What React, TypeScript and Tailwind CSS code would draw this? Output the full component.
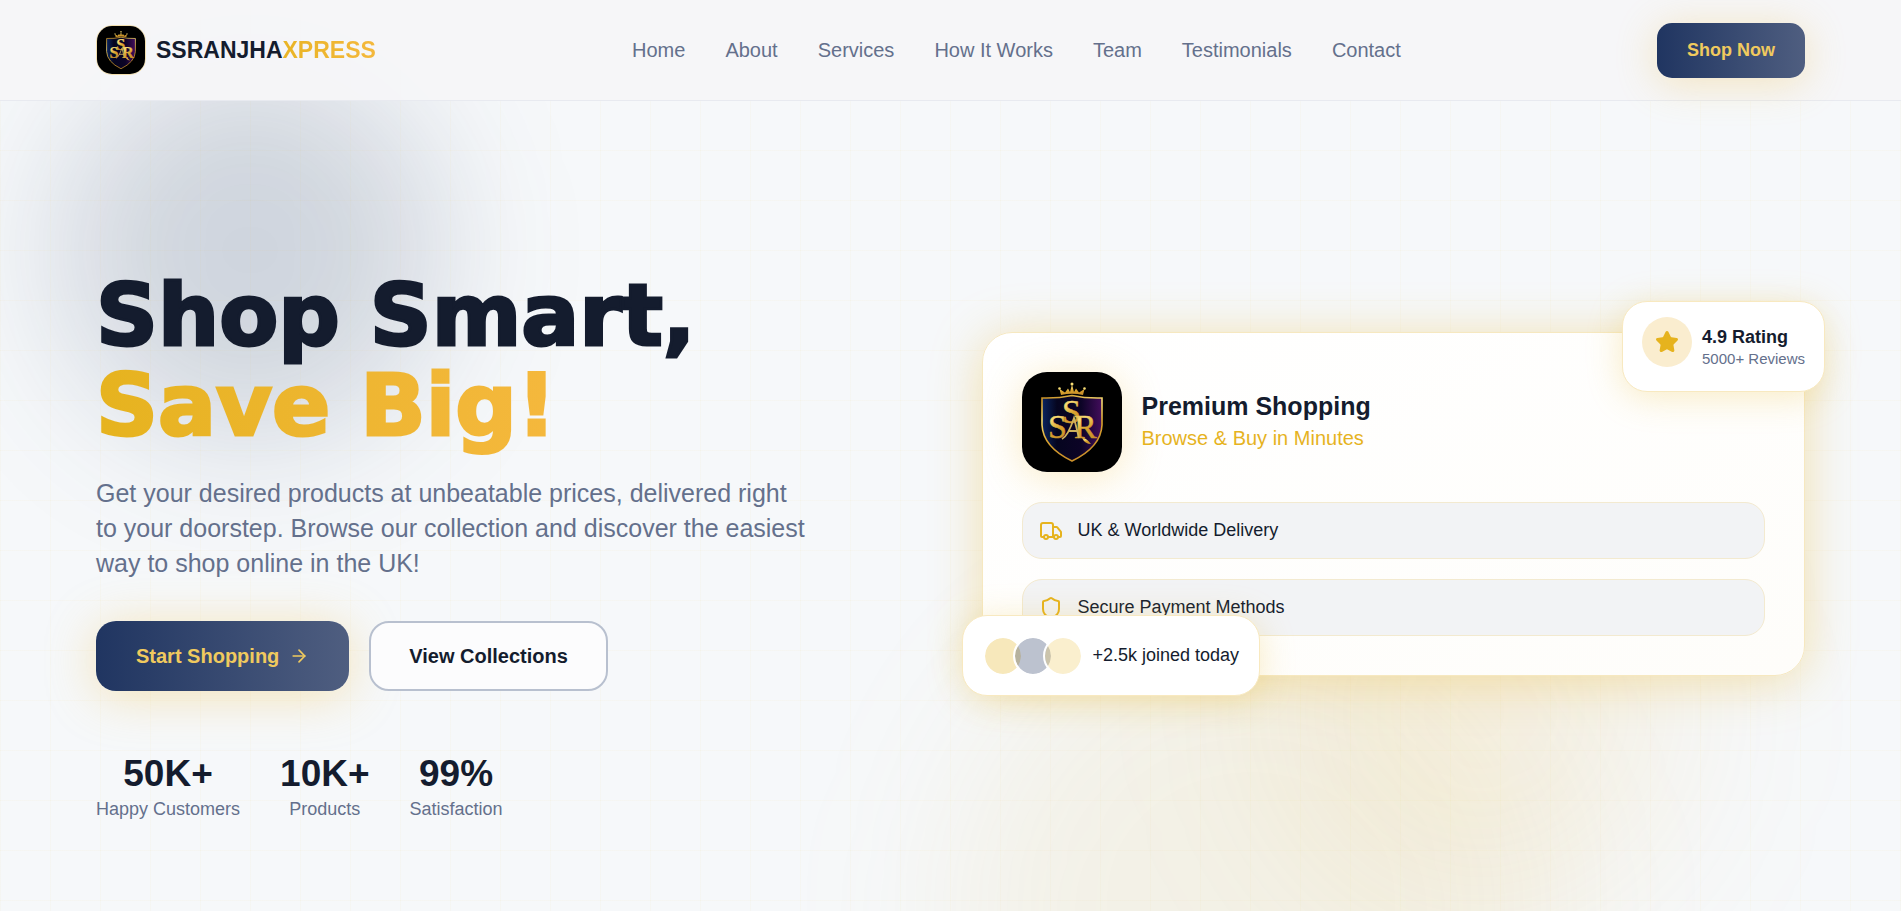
import { ArrowRight, Shield, Star, Truck } from "lucide-react"

const navLinks = ["Home", "About", "Services", "How It Works", "Team", "Testimonials", "Contact"]

const stats = [
  { value: "50K+", label: "Happy Customers" },
  { value: "10K+", label: "Products" },
  { value: "99%", label: "Satisfaction" },
]

const features = [
  { icon: Truck, label: "UK & Worldwide Delivery" },
  { icon: Shield, label: "Secure Payment Methods" },
]

function Crest({ id, className }: { id: string; className: string }) {
  const gold = `url(#${id}-gold)`
  return (
    <svg viewBox="0 0 100 100" className={className} role="img" aria-label="SSR crest">
      <defs>
        <linearGradient id={`${id}-gold`} x1="0" y1="0" x2="0.3" y2="1">
          <stop offset="0" stopColor="#c58a1d" />
          <stop offset="0.35" stopColor="#f7dc74" />
          <stop offset="0.65" stopColor="#d9a32e" />
          <stop offset="1" stopColor="#c98f2a" />
        </linearGradient>
        <linearGradient id={`${id}-field`} x1="0" y1="0" x2="1" y2="0">
          <stop offset="0" stopColor="#0a2560" />
          <stop offset="0.25" stopColor="#05051f" />
          <stop offset="0.65" stopColor="#0c0426" />
          <stop offset="1" stopColor="#430d5c" />
        </linearGradient>
      </defs>
      <rect width="100" height="100" fill="#000" />
      <path
        d="M20 26 Q36 26.500 50 23.500 Q64 26.500 80 26 V53 Q79 75 50 89 Q21 75 20 53 Z"
        fill={`url(#${id}-field)`}
        stroke={gold}
        strokeWidth="1.600"
      />
      <path d="M39 23 L37.500 17 L43 20.500 L46 16.500 L48 20 L50 12.500 L52 20 L54 16.500 L57 20.500 L62.500 17 L61 23 Q50 20.500 39 23 Z" fill={gold} />
      <circle cx="50" cy="12" r="1.500" fill="#f7dc74" />
      <circle cx="37.500" cy="16.500" r="1.300" fill="#f7dc74" />
      <circle cx="62.500" cy="16.500" r="1.300" fill="#f7dc74" />
      <g fill={gold} stroke={gold} strokeWidth="0.500" className="font-['Liberation_Serif',serif]">
        <text x="40" y="51" fontSize="34">S</text>
        <text x="26" y="66" fontSize="34">S</text>
        <text x="52" y="66" fontSize="34">R</text>
      </g>
      <path d="M40 67 Q46 64 52 46 L57 66 M46 59 H56" fill="none" stroke="#cdb25c" strokeWidth="1.800" />
      <path d="M60 66 Q63 72 69 72 Q65 67 62 66 Z" fill={gold} />
    </svg>
  )
}

function Header() {
  return (
    <header className="relative z-10 border-b border-[#e8eaf0] bg-[#f5f5f8]/95 px-24">
      <div className="flex h-[100px] items-center justify-between">
        <a href="#home" className="flex items-center gap-2.5 text-[23px] font-bold text-[#141c2e]">
          <Crest id="nav" className="size-[50px] rounded-[16px] border border-[#f3dfae]" />
          <span>
            SSRANJHA<span className="bg-gradient-to-r from-[#e9b425] to-[#f4b83c] bg-clip-text text-transparent">XPRESS</span>
          </span>
        </a>
        <nav className="flex gap-10">
          {navLinks.map((link) => (
            <a key={link} href={`#${link}`} className="text-[20px] text-[#64708c]">
              {link}
            </a>
          ))}
        </nav>
        <button className="h-[55px] rounded-[15px] bg-gradient-to-r from-[#203561] to-[#4f5e80] px-[30px] text-[18px] font-bold text-[#f0ca5e] shadow-[0_5px_40px_rgba(240,190,60,0.3)]">
          Shop Now
        </button>
      </div>
    </header>
  )
}

function HeroText() {
  return (
    <div className="pt-[82px]">
      <h1 className="font-['DejaVu_Sans',sans-serif] text-[86px] leading-[90px] font-bold text-[#141c2e] [-webkit-text-stroke:3px_#141c2e]">
        Shop Smart,
        <br />
        <span className="bg-gradient-to-r from-[#e6b31e] to-[#f5b83d] bg-clip-text text-transparent [-webkit-text-stroke:3px_transparent]">
          Save Big!
        </span>
      </h1>
      <p className="mt-[26px] max-w-[714px] text-[25px] leading-[35px] text-[#64708c]">
        Get your desired products at unbeatable prices, delivered right to your doorstep. Browse our collection and
        discover the easiest way to shop online in the UK!
      </p>
      <div className="mt-10 flex gap-5">
        <button className="flex h-[70px] items-center gap-2.5 rounded-[20px] bg-gradient-to-r from-[#203561] to-[#4f5e80] px-10 text-[20px] font-bold text-[#f0ca5e] shadow-[0_5px_50px_rgba(240,190,60,0.35)]">
          Start Shopping
          <ArrowRight className="size-5" />
        </button>
        <button className="h-[70px] rounded-[20px] border-2 border-[#b8c0cf] bg-[#fcfcfd] px-[38px] text-[20px] font-bold text-[#141c2e]">
          View Collections
        </button>
      </div>
      <div className="mt-[60px] flex gap-10 text-center">
        {stats.map((stat) => (
          <div key={stat.label}>
            <div className="text-[37px] leading-[46px] font-bold text-[#141c2e]">{stat.value}</div>
            <div className="text-[18px] leading-6 text-[#64708c]">{stat.label}</div>
          </div>
        ))}
      </div>
    </div>
  )
}

function ShowcaseCard() {
  return (
    <div className="relative rounded-[30px] border border-[#f6e8c0] bg-gradient-to-br from-white to-[#fefdfa] p-[39px] shadow-[0_5px_50px_rgba(235,185,50,0.38)]">
      <div className="flex items-center gap-5">
        <Crest id="card" className="size-[100px] rounded-[25px] shadow-[0_5px_40px_rgba(240,190,60,0.3)]" />
        <div>
          <h2 className="text-[25px] leading-8 font-bold text-[#141c2e]">Premium Shopping</h2>
          <p className="text-[20px] leading-8 text-[#e6b31e]">Browse &amp; Buy in Minutes</p>
        </div>
      </div>
      <ul className="mt-[30px] flex flex-col gap-5">
        {features.map(({ icon: Icon, label }) => (
          <li
            key={label}
            className="flex h-[57px] items-center gap-[15px] rounded-[20px] border border-[#f3ead0] bg-[#f2f3f5] px-4 text-[18px] text-[#141c2e]"
          >
            <Icon className="size-6 text-[#e6b31e]" />
            {label}
          </li>
        ))}
      </ul>

      <div className="absolute -top-8 -right-[21px] flex h-[91px] items-start gap-2.5 rounded-[25px] border border-[#f8e9c0] bg-white px-[19px] py-[15px] shadow-[0_5px_35px_rgba(235,185,50,0.28)]">
        <div className="flex size-[50px] items-center justify-center rounded-full bg-[#faedcf]">
          <Star className="size-6 fill-[#e6b31e] text-[#e6b31e]" />
        </div>
        <div className="pt-2">
          <div className="text-[18px] leading-6 font-bold text-[#141c2e]">4.9 Rating</div>
          <div className="text-[15px] leading-5 text-[#64708c]">5000+ Reviews</div>
        </div>
      </div>

      <div className="absolute -bottom-[21px] -left-[21px] flex h-[81px] items-center gap-2.5 rounded-[25px] border border-[#f8e9c0] bg-white px-5 shadow-[0_5px_35px_rgba(235,185,50,0.28)]">
        <div className="flex -space-x-2.5">
          <div className="size-10 rounded-full border-2 border-white bg-[#e6b31e]/30 bg-clip-padding" />
          <div className="size-10 rounded-full border-2 border-white bg-[#203561]/30 bg-clip-padding" />
          <div className="size-10 rounded-full border-2 border-white bg-[#f0ca5e]/30 bg-clip-padding" />
        </div>
        <span className="text-[18px] text-[#141c2e]">+2.5k joined today</span>
      </div>
    </div>
  )
}

export default function App() {
  return (
    <div className="relative flex min-h-screen flex-col overflow-hidden bg-[#f6f8fa] font-['Liberation_Sans',Arial,sans-serif]">
      {/* soft colour washes and the faint 50px grid behind everything */}
      <div className="absolute top-[60px] left-[60px] size-[380px] rounded-full bg-[#203561]/18 blur-[70px]" />
      <div className="absolute right-[350px] -bottom-[300px] size-[600px] rounded-full bg-[#e0b428]/9 blur-[80px]" />
      <div className="absolute right-[220px] bottom-0 size-[400px] rounded-full bg-[#ebb428]/10 blur-[90px]" />
      <div className="absolute inset-0 bg-[linear-gradient(rgba(230,179,30,0.03)_1px,transparent_1px),linear-gradient(90deg,rgba(230,179,30,0.03)_1px,transparent_1px)] bg-[length:50px_50px]" />
      <Header />
      <main className="relative grid flex-1 grid-cols-2 items-center gap-[62px] px-24 pb-1">
        <HeroText />
        <ShowcaseCard />
      </main>
    </div>
  )
}
